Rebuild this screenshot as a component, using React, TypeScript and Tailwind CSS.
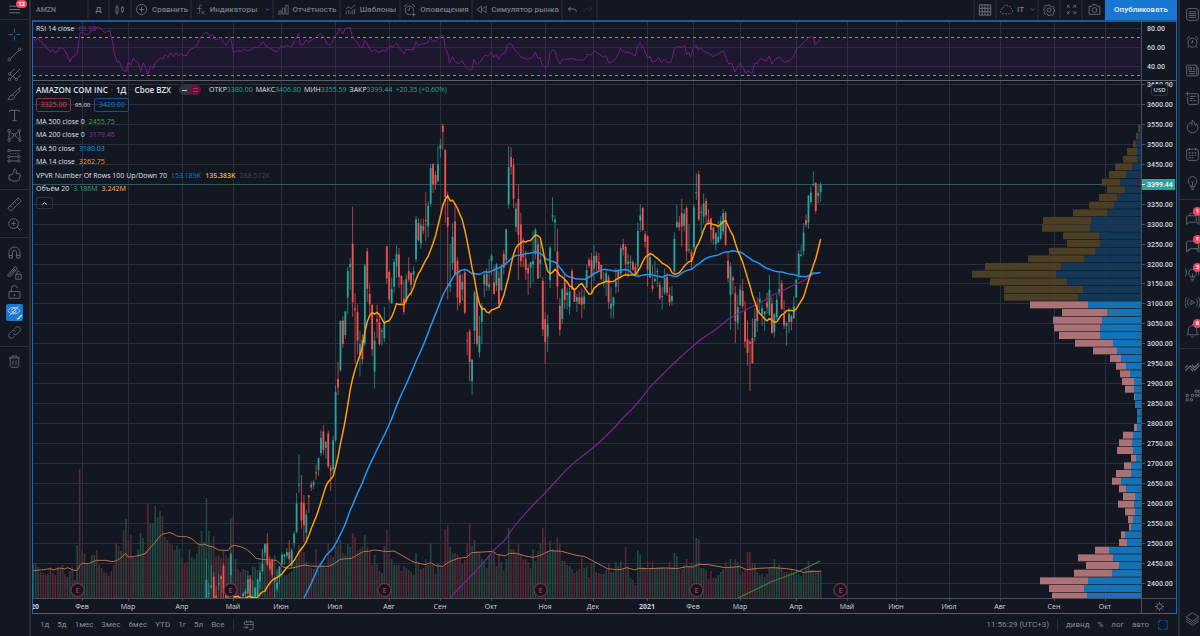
import type { ReactNode } from "react"

type Candle = [open: number, high: number, low: number, close: number]

// daily bars, one row per week or so, open / high / low / close
const candles: Candle[] = [
	// april
	[2346, 2461, 2335, 2408], [2372, 2400, 2316, 2375], [2389, 2445, 2386, 2393], [2416, 2428, 2279, 2328],
	[2369, 2394, 2351, 2363], [2399, 2424, 2382, 2399], [2417, 2420, 2362, 2410], [2443, 2450, 2363, 2376],
	[2372, 2373, 2306, 2314], [2330, 2391, 2310, 2372], [2419, 2475, 2396, 2474],
	// may
	[2336, 2362, 2258, 2286], [2256, 2326, 2256, 2315], [2340, 2351, 2307, 2317], [2329, 2357, 2320, 2351],
	[2374, 2376, 2343, 2367], [2372, 2387, 2357, 2379], [2374, 2419, 2372, 2409], [2411, 2419, 2355, 2356],
	[2366, 2407, 2337, 2367], [2361, 2391, 2353, 2388], [2368, 2411, 2356, 2409], [2404, 2433, 2384, 2426],
	[2429, 2485, 2428, 2449], [2477, 2500, 2467, 2497], [2500, 2525, 2442, 2446], [2455, 2469, 2430, 2436],
	[2458, 2462, 2414, 2421], [2404, 2413, 2330, 2410], [2384, 2436, 2378, 2401], [2415, 2442, 2398, 2442],
	// june
	[2448, 2476, 2444, 2471], [2467, 2473, 2445, 2472], [2468, 2488, 2461, 2478], [2477, 2507, 2450, 2460],
	[2444, 2488, 2437, 2483], [2500, 2530, 2487, 2524], [2529, 2626, 2525, 2600], [2645, 2722, 2626, 2647],
	[2603, 2671, 2536, 2557], [2601, 2621, 2503, 2545], [2526, 2584, 2508, 2572], [2620, 2620, 2576, 2615],
	[2647, 2655, 2631, 2640], [2645, 2659, 2636, 2653], [2678, 2697, 2659, 2675], [2684, 2715, 2669, 2713],
	[2726, 2783, 2718, 2764], [2780, 2796, 2721, 2734], [2739, 2756, 2712, 2754], [2775, 2782, 2688, 2692],
	[2690, 2696, 2630, 2680], [2685, 2769, 2675, 2758],
	// july
	[2758, 2895, 2754, 2879], [2912, 2955, 2871, 2890], [2934, 3059, 2930, 3057], [3058, 3069, 2990, 3000],
	[3022, 3083, 3012, 3081], [3116, 3193, 3074, 3182], [3192, 3215, 3135, 3200], [3251, 3344, 3068, 3104],
	[3089, 3127, 2950, 3084], [3080, 3098, 2973, 3008], [2971, 3032, 2918, 2999], [3009, 3024, 2948, 2961],
	[3001, 3201, 2994, 3196], [3232, 3240, 3105, 3138], [3125, 3150, 3065, 3099], [3098, 3098, 2970, 2986],
	[2930, 3031, 2888, 3008], [3062, 3098, 3015, 3055], [3054, 3077, 2995, 3000], [3030, 3039, 2996, 3033],
	[3014, 3092, 3005, 3051], [3244, 3246, 3151, 3164],
	// august
	[3180, 3184, 3104, 3111], [3101, 3167, 3101, 3138], [3143, 3213, 3127, 3205], [3194, 3247, 3165, 3225],
	[3224, 3240, 3140, 3167], [3170, 3172, 3101, 3148], [3113, 3159, 3073, 3080], [3108, 3174, 3101, 3162],
	[3182, 3217, 3155, 3161], [3178, 3178, 3120, 3148], [3173, 3194, 3154, 3182], [3212, 3320, 3205, 3312],
	[3303, 3315, 3256, 3260], [3252, 3312, 3238, 3297], [3295, 3314, 3275, 3284], [3310, 3380, 3257, 3307],
	[3294, 3357, 3267, 3346], [3351, 3451, 3344, 3441], [3450, 3453, 3378, 3400], [3423, 3433, 3386, 3401],
	[3408, 3495, 3405, 3450],
	// september
	[3489, 3513, 3467, 3499], [3547, 3552, 3486, 3531], [3485, 3488, 3303, 3368], [3318, 3381, 3111, 3294],
	[3144, 3250, 3130, 3149], [3202, 3303, 3185, 3268], [3307, 3349, 3170, 3175], [3208, 3217, 3083, 3116],
	[3172, 3187, 3096, 3102], [3136, 3175, 3108, 3156], [3179, 3187, 3074, 3078], [3009, 3029, 2972, 3008],
	[3031, 3037, 2905, 2955], [2906, 2962, 2871, 2960], [3033, 3134, 3000, 3129], [3120, 3128, 2993, 3000],
	[2978, 3070, 2965, 3020], [3055, 3102, 2999, 3095], [3149, 3176, 3117, 3174], [3176, 3189, 3133, 3145],
	[3142, 3212, 3133, 3149],
	// october
	[3208, 3225, 3173, 3221], [3154, 3196, 3124, 3125], [3146, 3202, 3132, 3199], [3165, 3182, 3090, 3100],
	[3135, 3200, 3132, 3196], [3225, 3234, 3174, 3191], [3210, 3289, 3197, 3287], [3350, 3496, 3339, 3443],
	[3468, 3493, 3424, 3443], [3448, 3464, 3340, 3364], [3293, 3355, 3280, 3339], [3363, 3400, 3160, 3273],
	[3299, 3329, 3192, 3207], [3222, 3266, 3192, 3217], [3213, 3234, 3160, 3185], [3190, 3199, 3122, 3176],
	[3191, 3205, 3140, 3205], [3199, 3282, 3154, 3207], [3225, 3291, 3212, 3286], [3249, 3264, 3163, 3163],
	[3201, 3257, 3165, 3211], [3158, 3167, 3019, 3036],
	// november
	[3062, 3079, 2950, 3004], [3018, 3074, 2980, 3048], [3159, 3245, 3140, 3241], [3319, 3367, 3306, 3322],
	[3304, 3322, 3232, 3311], [3231, 3289, 3112, 3144], [3095, 3114, 3019, 3035], [3062, 3140, 3049, 3137],
	[3160, 3176, 3087, 3110], [3122, 3141, 3086, 3129], [3093, 3142, 3073, 3131], [3183, 3189, 3135, 3136],
	[3134, 3140, 3105, 3105], [3106, 3125, 3080, 3117], [3117, 3132, 3098, 3100], [3116, 3139, 3065, 3098],
	[3100, 3134, 3086, 3118], [3141, 3198, 3140, 3185], [3211, 3216, 3190, 3195], [3209, 3228, 3125, 3168],
	// december
	[3188, 3248, 3157, 3220], [3221, 3232, 3181, 3203], [3206, 3228, 3181, 3186], [3198, 3198, 3159, 3162],
	[3156, 3180, 3141, 3158], [3158, 3184, 3120, 3177], [3167, 3174, 3088, 3104], [3088, 3142, 3064, 3101],
	[3096, 3118, 3063, 3116], [3143, 3190, 3126, 3156], [3181, 3188, 3129, 3165], [3176, 3247, 3163, 3240],
	[3250, 3263, 3221, 3236], [3243, 3249, 3171, 3201], [3200, 3226, 3166, 3206], [3202, 3222, 3180, 3206],
	[3205, 3210, 3184, 3185], [3193, 3202, 3169, 3172], [3194, 3304, 3172, 3283], [3309, 3350, 3281, 3322],
	[3341, 3342, 3282, 3285], [3275, 3282, 3241, 3256],
	// january
	[3270, 3272, 3144, 3186], [3166, 3223, 3165, 3218], [3146, 3197, 3131, 3138], [3157, 3208, 3155, 3162],
	[3180, 3190, 3142, 3182], [3148, 3156, 3110, 3114], [3120, 3142, 3086, 3120], [3128, 3189, 3122, 3165],
	[3167, 3178, 3120, 3127], [3123, 3142, 3095, 3104], [3107, 3145, 3096, 3120], [3181, 3279, 3175, 3263],
	[3293, 3348, 3289, 3306], [3304, 3321, 3283, 3292], [3328, 3363, 3243, 3294], [3296, 3338, 3282, 3326],
	[3341, 3346, 3207, 3232], [3235, 3301, 3228, 3237], [3230, 3236, 3184, 3206],
	// february
	[3242, 3350, 3235, 3342], [3380, 3427, 3361, 3380], [3425, 3434, 3308, 3312], [3330, 3347, 3277, 3331],
	[3319, 3377, 3302, 3352], [3358, 3365, 3304, 3322], [3312, 3338, 3297, 3305], [3314, 3317, 3254, 3286],
	[3292, 3292, 3248, 3262], [3250, 3280, 3234, 3277], [3254, 3308, 3253, 3268], [3263, 3320, 3259, 3308],
	[3282, 3338, 3273, 3328], [3328, 3333, 3245, 3249], [3208, 3232, 3154, 3164], [3123, 3204, 3036, 3194],
	[3166, 3171, 3125, 3159], [3127, 3145, 3002, 3057], [3052, 3122, 3036, 3092],
	// march
	[3097, 3149, 3094, 3136], [3133, 3163, 3087, 3094], [3081, 3107, 2990, 3005], [3012, 3058, 2945, 2977],
	[3005, 3009, 2881, 3000], [3015, 3064, 2951, 2951], [3017, 3090, 3005, 3062], [3098, 3116, 3030, 3057],
	[3104, 3131, 3082, 3113], [3075, 3098, 3045, 3089], [3074, 3082, 3032, 3081], [3104, 3128, 3075, 3091],
	[3073, 3173, 3070, 3135], [3101, 3116, 3025, 3027], [3029, 3077, 3016, 3074], [3067, 3126, 3060, 3110],
	[3127, 3182, 3120, 3137], [3151, 3160, 3085, 3087], [3072, 3109, 3037, 3046], [3044, 3056, 2996, 3052],
	[3055, 3091, 3028, 3075], [3070, 3073, 3034, 3055], [3064, 3119, 3062, 3094],
	// april
	[3117, 3162, 3115, 3161], [3173, 3235, 3161, 3226], [3223, 3247, 3217, 3223], [3233, 3303, 3223, 3279],
	[3310, 3324, 3292, 3299], [3304, 3372, 3288, 3372], [3355, 3395, 3351, 3379], [3400, 3432, 3395, 3400],
	[3404, 3404, 3326, 3333], [3371, 3397, 3352, 3379], [3380, 3406, 3355, 3399],
]

// bar heights before the first candle, negative is a down day
const earlyVolume = [
	33, 34, 35, 31, -26, -25, -24, 24, -31, -25, -23, -31, 29, -33, -24, 21, 27, -31, 18, 53,
	-129, -49, 44, 35, -35, 43, 43, -48, 33, -30, -26, 25, -22, -27, -33, 55, -52, 47, -68, 79,
	-57, -63, 41, -40, 49, 65, 60, -47, -95, 74, 75, 92, 81, 87, -82, -61, 58, -54, -53, 48,
	52, 49, -39, -35, -36, 49, 41, 39, 44, 53, 67, 56,
]

const lateVolume = [
	100, 67, 53, 62, 41, 43, 40, 48, 43, 40, 80,
	82, 39, 29, 26, 29, 28, 27, 23, 32, 31, 28, 36, 49, 54, 50, 35, 34, 43, 27, 31,
	27, 23, 23, 25, 27, 33, 39, 53, 51, 46, 36, 32, 30, 29, 49, 28, 34, 33, 30, 55, 43, 41,
	51, 53, 58, 45, 43, 54, 51, 65, 61, 47, 49, 51, 63, 51, 47, 33, 43, 34, 27, 25, 52, 68,
	44, 39, 33, 33, 33, 27, 32, 30, 28, 26, 23, 45, 35, 29, 30, 39, 33, 55, 34, 24, 35,
	30, 31, 69, 73, 51, 44, 45, 43, 39, 34, 38, 54, 74, 52, 58, 47, 46, 39, 37, 30, 43,
	43, 46, 32, 43, 36, 27, 39, 70, 49, 49, 44, 54, 43, 39, 39, 36, 30, 49, 37, 47, 55, 70,
	61, 47, 57, 49, 47, 61, 55, 37, 37, 33, 32, 29, 25, 27, 29, 40, 30, 32, 21, 35,
	36, 26, 25, 24, 24, 28, 35, 26, 26, 36, 32, 37, 30, 51, 32, 20, 18, 13, 48, 43, 31, 30,
	37, 29, 37, 30, 31, 31, 31, 29, 30, 36, 31, 45, 42, 28, 29, 33, 39, 31, 36,
	34, 60, 59, 30, 30, 28, 19, 27, 20, 20, 23, 26, 29, 36, 30, 39, 31, 39, 36,
	23, 26, 29, 46, 46, 35, 34, 26, 23, 24, 21, 24, 30, 31, 39, 31, 33, 29, 26, 26, 25, 29, 26,
	24, 24, 22, 26, 29, 37, 28, 28, 27, 27, 28,
]

// volume profile rows: left edge and the down/up split
const profile = [
	[1138, 1140], [1136, 1138], [1133, 1136], [1127, 1137], [1123, 1137], [1115, 1132], [1109, 1126], [1102, 1120],
	[1107, 1125], [1099, 1117], [1089, 1114], [1073, 1107], [1043, 1091], [1042, 1090], [1063, 1099], [1067, 1100],
	[1049, 1095], [1028, 1084], [985, 1061], [972, 1056], [990, 1067], [1004, 1083], [1004, 1078], [1030, 1088],
	[1062, 1107], [1053, 1102], [1054, 1100], [1059, 1100], [1075, 1113], [1093, 1117], [1110, 1121], [1116, 1126],
	[1120, 1130], [1122, 1134], [1125, 1134], [1134, 1135], [1135, 1135], [1137, 1137], [1137, 1137], [1134, 1137],
	[1123, 1133], [1119, 1132], [1117, 1133], [1131, 1136], [1124, 1131], [1116, 1131], [1112, 1121], [1119, 1126],
	[1123, 1135], [1118, 1134], [1125, 1135], [1128, 1133], [1129, 1131], [1121, 1125], [1119, 1127], [1095, 1109],
	[1078, 1113], [1086, 1119], [1074, 1112], [1040, 1088], [1049, 1084], [1052, 1087],
]

const rsiPoints =
	"98,122 103,118 108,122 114,112 120,124 125,124 130,136 136,134 142,146 147,150 152,156 158,148 164,158 174,154 180,142 190,146 196,154 203,168 210,186 216,172 224,168 232,158 240,100 246,95 256,104 266,102 280,88 295,80 305,88 314,98 322,94 330,92 338,128 344,164 352,188 358,184 366,204 374,214 380,213 385,186 392,196 400,174 408,185 414,188 422,214 430,188 438,206 444,222 452,196 460,206 466,188 474,182 480,174 488,178 496,164 504,172 512,158 520,170 528,158 536,168 544,160 552,168 560,166 568,150 580,144 590,138 598,120 606,106 614,100 620,96 630,108 638,104 646,120 655,116 662,112 670,128 678,136 686,124 692,112 700,158 712,152 724,154 732,146 740,152 748,152 756,148 764,142 772,144 780,136 790,126 798,138 808,144 818,150 830,156 838,146 844,136 852,142 860,136 868,140 876,138 886,118 896,100 900,132 908,136 918,120 926,126 934,120 944,114 952,108 960,100 966,104 974,116 980,130 988,136 996,130 1002,110 1010,106 1018,84 1028,102 1036,86 1050,82 1056,106 1064,122 1072,126 1080,142 1088,144 1094,120 1102,132 1110,148 1116,156 1124,148 1136,158 1148,150 1154,156 1164,146 1172,138 1180,140 1190,130 1200,146 1212,162 1218,148 1240,150 1248,125 1254,136 1264,132 1280,130 1292,112 1298,124 1310,122 1324,106 1330,106 1336,146 1344,164 1348,190 1358,170 1364,184 1376,192 1386,182 1396,200 1408,210 1416,208 1422,178 1430,194 1440,186 1454,166 1466,168 1474,158 1482,172 1488,162 1496,178 1504,164 1516,158 1522,136 1528,130 1536,134 1544,150 1556,162 1564,172 1584,178 1598,172 1606,156 1614,176 1620,172 1628,198 1636,202 1644,196 1650,158 1658,150 1666,154 1672,178 1680,192 1688,178 1720,176 1730,180 1750,180 1758,172 1762,162 1772,166 1784,154 1798,162 1810,172 1818,166 1826,188 1834,186 1848,176 1862,144 1872,156 1890,158 1906,168 1912,140 1920,128 1932,146 1940,168 1946,174 1950,168 1956,186 1966,184 1976,172 1984,188 1992,178 2002,188 2012,188 2018,170 2022,148 2032,140 2046,142 2054,136 2060,164 2066,158 2072,170 2080,144 2088,136 2094,150 2102,144 2112,154 2130,162 2140,170 2146,166 2170,152 2180,178 2186,192 2196,190 2204,216 2212,204 2220,190 2228,202 2236,218 2246,214 2256,220 2264,190 2272,190 2280,176 2290,180 2300,182 2308,168 2316,192 2326,178 2338,170 2352,186 2368,182 2380,172 2390,146 2400,140 2408,130 2416,124 2426,112 2440,110 2446,134 2454,126 2462,120"

const volumeMaPoints =
	"98,464 130,461 150,458 160,462 180,456 195,459 203,455 222,463 232,463 240,448 246,442 265,443 290,433 318,433 335,437 350,434 365,424 376,412 385,423 400,422 420,418 437,412 450,396 465,380 478,362 488,354 500,352 508,349 520,354 530,360 545,362 560,362 575,368 592,383 605,387 612,384 625,390 640,393 655,402 670,403 685,403 692,392 703,388 722,392 740,400 755,413 768,427 785,430 830,433 840,443 848,453 870,457 885,454 900,450 915,447 930,450 960,451 985,451 1000,445 1020,430 1055,427 1070,418 1090,407 1105,406 1122,402 1140,404 1160,407 1182,405 1200,415 1240,438 1275,446 1292,440 1308,449 1328,451 1350,436 1375,427 1400,424 1415,410 1480,406 1490,415 1515,420 1528,412 1550,412 1575,420 1600,424 1620,418 1650,404 1685,406 1725,417 1755,422 1785,438 1822,458 1850,461 1865,460 1880,455 1905,462 1915,457 1945,458 2000,456 2030,458 2060,452 2080,453 2095,445 2125,446 2175,455 2220,452 2240,461 2275,457 2320,455 2360,458 2385,462 2410,469 2440,466 2462,466"

const ma200Points =
	"450,598 461,586 473,574 485,561 495,549 504,541 516,524 532,506 545,493 557,480 566,470 575,462 585,454 594,447 605,437 615,427 621,420 633,408 640,400 650,387 662,375 672,365 685,353 700,340 715,330 730,318 743,311 760,303 773,295 790,287 805,280 812,275 820,272"

const months: [number, string][] = [
	[82, "Фев"], [128, "Мар"], [182, "Апр"], [233, "Май"], [281, "Июн"], [335, "Июл"], [389, "Авг"],
	[440, "Сен"], [491, "Окт"], [545, "Ноя"], [593, "Дек"], [647, "2021"], [693, "Фев"], [740, "Мар"],
	[796, "Апр"], [847, "Май"], [896, "Июн"], [949, "Июл"], [1000, "Авг"], [1054, "Сен"], [1105, "Окт"],
]

const prices = Array.from({ length: 26 }, (_, i) => 3650 - i * 50)
const earnings = [77, 230, 384, 540, 696, 840]

const BAR_STEP = 2.4375
const FIRST_CANDLE_X = 206.4
const BOTTOM = 598

const priceY = (price: number) => 104.5 + (3600 - price) * 0.3988
const candleX = (i: number) => FIRST_CANDLE_X + i * BAR_STEP

// simple moving average of the closes as polyline points
const movingAverage = (length: number) => {
	const points: string[] = []
	for (let i = length - 1; i < candles.length; i++) {
		let sum = 0
		for (let j = i - length + 1; j <= i; j++) sum += candles[j][3]
		points.push(`${candleX(i).toFixed(1)},${priceY(sum / length).toFixed(1)}`)
	}
	return points.join(" ")
}

function Chart() {
	const firstVolumeX = FIRST_CANDLE_X - earlyVolume.length * BAR_STEP
	const lastY = priceY(3399.44)

	return (
		<svg viewBox="33 22 1143 591" className="block w-full h-auto" role="img" aria-label="AMZN">
			<defs>
				<clipPath id="plot">
					<rect x="33" y="22" width="1108" height="576" />
				</clipPath>
			</defs>
			{/*rsi pane*/}
			<rect x="33" y="37.5" width="1108" height="38" fill="#1d172f" />
			<g stroke="#2b2f3c" strokeWidth="1">
				{months.map(([x]) => (
					<line key={x} x1={x + 0.5} x2={x + 0.5} y1="22" y2="598" />
				))}
				{[28.5, 47.5, 66.5].map((y) => (
					<line key={y} x1="33" x2="1141" y1={y} y2={y} />
				))}
				{prices.map((p) => (
					<line key={p} x1="33" x2="1141" y1={Math.floor(priceY(p)) + 0.5} y2={Math.floor(priceY(p)) + 0.5} />
				))}
			</g>
			<g stroke="#8a8c96" strokeWidth="1" strokeDasharray="3 3">
				<line x1="33" x2="1141" y1="37.5" y2="37.5" />
				<line x1="33" x2="1141" y1="75.5" y2="75.5" />
			</g>
			<polyline points={rsiPoints} transform="scale(0.33333)" fill="none" stroke="#741c86" strokeWidth="3" />
			<line x1="33" x2="1176" y1="80.5" y2="80.5" stroke="#5d5f66" />

			<g clipPath="url(#plot)">
				{/*volume*/}
				{earlyVolume.map((v, i) => (
					<rect key={i} x={firstVolumeX + i * BAR_STEP - 0.8} y={BOTTOM - Math.abs(v)} width="1.6" height={Math.abs(v)} fill={v < 0 ? "#562735" : "#224840"} />
				))}
				{lateVolume.map((v, i) => (
					<rect key={i} x={candleX(i) - 0.8} y={BOTTOM - v} width="1.6" height={v} fill={candles[i] && candles[i][3] < candles[i][0] ? "#562735" : "#224840"} />
				))}
				<polyline points={volumeMaPoints} transform="translate(0 416) scale(0.33333)" fill="none" stroke="#b87045" strokeWidth="3" />
				<polyline points="738,598 771,582 795,573 808,567 820,561" fill="none" stroke="#3a8341" strokeWidth="1.2" />

				<line x1="33" x2="1141" y1={lastY} y2={lastY} stroke="#26a69a" strokeWidth="1" opacity="0.4" />

				{/*candles*/}
				{candles.map(([o, h, l, c], i) => {
					const color = c >= o ? "#26a69a" : "#ef5350"
					const top = priceY(Math.max(o, c))
					return (
						<g key={i}>
							<line x1={candleX(i)} x2={candleX(i)} y1={priceY(h)} y2={priceY(l)} stroke={color} strokeWidth="1" opacity="0.7" />
							<rect x={candleX(i) - 0.9} y={top} width="1.8" height={Math.max(1, priceY(Math.min(o, c)) - top)} fill={color} />
						</g>
					)
				})}

				<polyline points={ma200Points} fill="none" stroke="#75268a" strokeWidth="1.2" />
				<polyline
					points={`304,598 310,586 314,577 318,568 324,559 ${movingAverage(50)}`}
					fill="none"
					stroke="#2196f3"
					strokeWidth="1.5"
				/>
				<polyline points={`233,597 ${movingAverage(14)}`} fill="none" stroke="#ff9f0a" strokeWidth="1.5" />

				{/*volume profile*/}
				{profile.map(([left, split], i) => {
					const y = 125 + i * 7.667
					const inArea = i < 23
					return (
						<g key={i} opacity="0.95">
							<rect x={left} y={y} width={split - left} height="7" fill={inArea ? "#4e4124" : "#b57679"} />
							<rect x={split} y={y} width={1141 - split} height="7" fill={inArea ? "#133a5a" : "#1677bc"} />
						</g>
					)
				})}
			</g>

			{earnings.map((x) => (
				<g key={x}>
					<circle cx={x + 0.5} cy="590" r="6.6" fill="#131722" stroke="#7e303e" strokeWidth="1.2" />
					<text x={x + 0.5} y="592.5" fontSize="7" fontWeight="600" textAnchor="middle" fill="#a33c4a">E</text>
				</g>
			))}

			{/*axes*/}
			<g stroke="#4c4f59">
				<line x1="1141.5" x2="1141.5" y1="22" y2="613" />
				<line x1="33" x2="1176" y1="598.5" y2="598.5" />
				{prices.map((p) => (
					<line key={p} x1="1142" x2="1145" y1={Math.floor(priceY(p)) + 0.5} y2={Math.floor(priceY(p)) + 0.5} />
				))}
				{months.map(([x]) => (
					<line key={x} x1={x + 0.5} x2={x + 0.5} y1="599" y2="601" />
				))}
			</g>
			<g fontSize="7" fill="#d1d4dc" className="font-['Roboto',sans-serif]" fontWeight="500">
				<text x="1147" y="30.5">80.00</text>
				<text x="1147" y="49.5">60.00</text>
				<text x="1147" y="68.5">40.00</text>
				{/*3400 sits under the last price label*/}
				{prices.filter((p) => p !== 3400).map((p) => (
					<text key={p} x="1147" y={Math.round(priceY(p) + 2.5)}>{p}.00</text>
				))}
			</g>
			<rect x="1151.5" y="84.5" width="16" height="11" rx="2.5" fill="#131722" stroke="#2f333f" />
			<text x="1159.5" y="92" fontSize="6" fontWeight="600" textAnchor="middle" fill="#d1d4dc">USD</text>
			<rect x="1142" y="179" width="33" height="11" fill="#26a69a" />
			<line x1="1142" x2="1145" y1="184.5" y2="184.5" stroke="#ffffff" />
			<text x="1147" y="187" fontSize="7" fontWeight="500" fill="#ffffff" className="font-['Roboto',sans-serif]">3399.44</text>
			<g fontSize="7" fill="#d1d4dc" fontWeight="500" textAnchor="middle">
				<text x="35" y="609" fontWeight="700">20</text>
				{months.map(([x, name]) => (
					<text key={x} x={x} y="609" fontWeight={name === "2021" ? 700 : 500}>{name}</text>
				))}
			</g>
			<g stroke="#787b86" fill="none" transform="translate(1159.5 606.5)">
				<circle r="2.6" strokeWidth="0.8" />
				<path d="M0-4.4V-3M0 4.4V3M-4.4 0H-3M4.4 0H3M-3.1-3.1l1 1M3.1 3.1l-1-1M-3.1 3.1l1-1M3.1-3.1l-1 1" strokeWidth="1" />
			</g>
		</svg>
	)
}

function Icon({ children, className = "size-[17px]" }: { children: ReactNode; className?: string }) {
	return (
		<svg viewBox="0 0 28 28" className={`shrink-0 ${className}`} fill="none" stroke="currentColor" strokeWidth="1.5" strokeLinejoin="round" aria-hidden="true">
			{children}
		</svg>
	)
}

const icons = {
	menu: <path d="M4 8h20M4 14h20M4 20h20" strokeWidth="2" />,
	cross: <path d="M14 4v7M14 17v7M4 14h7M17 14h7" strokeWidth="1.8" />,
	line: <><circle cx="5.5" cy="22.5" r="2.2" /><circle cx="22.5" cy="5.5" r="2.2" /><path d="M7.5 20.5l13-13" /></>,
	fork: <><circle cx="6" cy="13" r="2" /><circle cx="6" cy="22" r="2" /><circle cx="17" cy="22" r="2" /><path d="M7.500 11.500l7-7M7.500 20.500L23 5M18.500 20.500l6-6M7.500 14.500l8 6" /></>,
	brush: <><path d="M10 15c-3 0-4 2-4.500 4-.3 1.500-1.500 2.500-2.500 3 4 1.500 10 .5 11-3 .4-2-1.500-4-4-4z" /><path d="M10.500 14.500l9-9c1.500-1.500 4.500 0 3 2.500l-8 9" /><path d="M20 5l5-3" /></>,
	text: <path d="M6 8V5.500h16V8M14 5.500v17M10.500 22.500h7" />,
	pattern: <><circle cx="5" cy="6" r="2" /><circle cx="5" cy="22" r="2" /><circle cx="14" cy="13" r="2" /><circle cx="22" cy="6" r="2" /><circle cx="23" cy="22" r="2" /><path d="M5 8v12M6.500 20.500l6-6M15.500 11.500l5-4M22 8l1 12M6.500 7.500l6 4.500M15.500 14.500l6 6" /></>,
	forecast: <><circle cx="5" cy="6" r="2" /><circle cx="5" cy="16" r="2" /><circle cx="5" cy="23" r="2" /><circle cx="21" cy="16" r="2" /><circle cx="21" cy="23" r="2" /><path d="M7 6h17M7 16h12M7 23h12" /><path d="M7 11h16" strokeDasharray="2 2" /></>,
	thumb: <path d="M5 13h4l4-5V5c0-2.500 4-2 4 1v5h5c2 0 2 2 1.500 3.500l-2 7c-.3 1-1 1.500-2 1.500H11c-1 0-2-1-2-2H5z" />,
	ruler: <path d="M3 20L20 3l5 5L8 25zM7 16l2.500 2.500M10.500 12.500L13 15M14 9l2.500 2.500M17.500 5.500L20 8" />,
	zoom: <><circle cx="12.500" cy="12.500" r="8" /><path d="M12.500 9v7M9 12.500h7M18.500 18.500l5 5" /></>,
	magnet: <path d="M5 23v-9a9 9 0 0118 0v9h-5.500v-9a3.500 3.500 0 00-7 0v9zM5 19h5.500M17.500 19H23" />,
	pencilLock: <><path d="M3 18L15 4l4 3L8 20H3zM12 8l4 3M6 18l9-10" /><path d="M16 17h9v8h-9zM18 17v-2.500a2.500 2.500 0 015-.5" /><path d="M20.500 20v2" /></>,
	lock: <><path d="M5 12.500h18v11H5zM9 12.500V8a5 5 0 0110-1" /><path d="M14 16.500v3" strokeWidth="2" /></>,
	eye: <><path d="M3 11c4-7 16-7 20 0-4 7-16 7-20 0zM6 19L21 3" /><circle cx="13" cy="11" r="3.500" /><path d="M18 24c2 1 4 0 4-2l4-4" strokeWidth="2.500" /></>,
	link: <path d="M12 16a4.500 4.500 0 006.500.3l4-4a4.500 4.500 0 00-6.500-6.500L14 8M16 12a4.500 4.500 0 00-6.500-.3l-4 4a4.500 4.500 0 006.500 6.500l2-2" />,
	trash: <path d="M5 8h18M10 8V5h8v3M7 8v13c0 1.500 1 2.500 2.500 2.500h9c1.500 0 2.500-1 2.500-2.500V8M11.500 12v8M16.500 12v8" />,
	bars: <><path d="M8 4v4M8 20v4M6 8h4v12H6zM19 6v3M19 17v3M17 9h4v8h-4z" /></>,
	plus: <><circle cx="14" cy="14" r="9.500" /><path d="M14 9v10M9 14h10" /></>,
	fx: <path d="M17 5c-3-1.500-5 0-5 3v11c0 3-2 4.500-5 3.500M7 12h9M16 17l7 7M23 17l-7 7" />,
	report: <path d="M4 24v-7h5v7zM11.500 24V11h5v13zM19 24V5h5v19z" />,
	template: <path d="M4 13l6-5 5 4 9-8M5 24v-6M10 24v-9M15 24v-7M19 24v-9M23 24V13" />,
	alarm: <><circle cx="14" cy="14.500" r="8.500" /><path d="M14 9.500v5h-4M4 8.500c0-3 2-5 5-5M24 8.500c0-3-2-5-5-5M7 21l-2 3M21 21l2 3" /></>,
	alarmAdd: <><path d="M21 17a8.500 8.500 0 10-5 5.500M13 9v5.500H9M3.500 8c0-3 2-5 5-5M23 8c0-3-2-5-5-5M21 19v8M17 23h8" /></>,
	rewind: <path d="M14 7v14L4 14zM24 7v14l-10-7z" />,
	undo: <path d="M10 8l-5 5 5 5M5.500 13H17c3 0 5 2 5 6" strokeWidth="2" />,
	redo: <path d="M18 8l5 5-5 5M22.500 13H11c-3 0-5 2-5 6" strokeWidth="2" />,
	layout: <path d="M4 5h20v18H4zM9 5v18M14 5v18M19 5v18M4 11h20M4 17h20" />,
	cloud: <path d="M8 22a5 5 0 01-.5-10c1-8 12-8 13.500-1 6 1 5 11-1 11z" strokeDasharray="3 2" />,
	gear: <><circle cx="14" cy="14" r="4" /><path d="M12 4h4l.7 3 2.300 1 2.700-1.700 2.600 2.700-1.600 2.700 1 2.300 2.300.5v2l-3 .7-1 2.300 1.700 2.700-2.700 2.600-2.700-1.600-2.300 1L16 25h-4l-.7-3-2.300-1-2.700 1.600-2.600-2.600L5.400 17.300l-1-2.300L3 14.500v-2L5 12l1-2.500L4.300 7 7 4.300 9.500 6l2-1z" /></>,
	expand: <path d="M5 10V5h5M18 5h5v5M23 18v5h-5M10 23H5v-5M6 6l5 5M22 6l-5 5M22 22l-5-5M6 22l5-5" />,
	camera: <><path d="M4 8h5l2-3h6l2 3h5v15H4z" /><circle cx="14" cy="15" r="4.500" /></>,
	list: <><rect x="3" y="3" width="22" height="22" rx="4" /><path d="M7 9h14M7 12.500h14M7 16h14M7 19.500h14" /></>,
	news: <><path d="M3 4h19v17c0 2 3 2 3 0V9h-3M3 4v17c0 2 1 3 3 3h17" /><path d="M7 8h5v5H7zM15 9h4M15 12h4M7 16h12M7 20h12" /></>,
	data: <><path d="M10 5h13c1.500 0 2 1 2 2v15c0 2-1 3-3 3H8c-2 0-3-1-3-3V11M5 1v8M1 5h8M9 10h12M9 14h7M9 18h4M15 18h6" /></>,
	fire: <path d="M13 6C8 7 4 11 4 16a10 9.500 0 0020 0c0-3-1-5-2.500-7-.5 2-1.500 3-3 3.500C19 9 17 5 13 2c1 2 1 3 0 4v6" />,
	calendar: <><rect x="3" y="4" width="22" height="21" rx="4" /><path d="M8 2v4M20 2v4M7 11h3M12.500 11h3M18 11h3M7 15.500h3M12.500 15.500h3M18 15.500h3M7 20h3M12.500 20h3" strokeWidth="2" /></>,
	bulb: <path d="M10 21c0-4-4-5-4-10a8 8 0 0116 0c0 5-4 6-4 10zM10 24h8M11.500 27h5M14 20v-7M12 12l2 2 2-2" />,
	chats: <path d="M9 9V6c0-1 1-2 2-2h14M3 11c0-1 1-2 2-2h14c1 0 2 1 2 2v8c0 1-1 2-2 2H8l-5 4zM21 21l5 4V9" />,
	chat: <path d="M3 6c0-1 1-2 2-2h20v14H11l-6 6M3 6v18l5-6M20 18l6 7V10" />,
	ideas: <path d="M10 19c0-3-3-4-3-8a7 7 0 0114 0c0 4-3 5-3 8zM11 23h6M12 26h4M14 19v-7M4 5c-2 3-2 8 0 11M1 3c-2 4-2 11 0 15M24 5c2 3 2 8 0 11" />,
	stream: <path d="M11 10v8l7-4zM7 7c-3 4-3 10 0 14M3 4c-4 6-4 14 0 20M21 7c3 4 3 10 0 14M25 4c4 6 4 14 0 20" />,
	bell: <path d="M3 22c3-2 3-4 3-9a8 8 0 0116 0c0 5 0 7 3 9zM11 25c1 2 5 2 6 0M14 5V2" />,
	trade: <path d="M1 20l9-9 8 8 9-9M1 14l4-4M10 16l5 5M13 9l5 5 8-8" strokeWidth="2" />,
	dom: <path d="M2 12h4v4H2zM2 20h4v4H2zM10 20h4v4h-4zM12 12h4v4h-4zM19 12h4v4h-4zM19 4h4v4h-4zM25 4h4v4h-4zM25 12h4v4h-4z" />,
	layers: <path d="M14 3l12 8-12 8L2 11zM2 15l12 8 12-8M2 19l12 8 12-8" />,
	goto: <path d="M5 11V8c0-1 1-2 2-2h15c1 0 2 1 2 2v13c0 1-1 2-2 2h-7M10 3v5M19 3v5M5 12h19M3 18h9M9 14.500l3.500 3.500L9 21.500" />,
	full: <path d="M4 10V5.500C4 4.500 4.500 4 5.500 4H10M18 4h4.500c1 0 1.500.5 1.500 1.500V10M24 18v4.500c0 1-.5 1.500-1.500 1.500H18M10 24H5.500C4.500 24 4 23.500 4 22.500V18M13 4h2M13 24h2M4 13v2M24 13v2" strokeWidth="2.200" />,
	down: <path d="M4 9l10 9 10-9" strokeWidth="4" />,
	up: <path d="M6 18l8-8 8 8" strokeWidth="4" />,
}

type IconName = keyof typeof icons

function RailButton({ icon, label, active }: { icon: IconName; label: string; active?: boolean }) {
	return (
		<button type="button" aria-label={label} className="flex flex-1 items-center justify-center w-full">
			<span className={active ? "flex rounded-xs bg-[#1976d2] text-[#b9d4f2]" : "flex"}>
				<Icon>{icons[icon]}</Icon>
			</span>
		</button>
	)
}

function LeftRail() {
	return (
		<aside className="flex flex-col shrink-0 w-[31px] border-r-2 border-[#2a2e39] text-[#686b76]">
			<button type="button" aria-label="Меню" className="relative flex h-5 w-full items-center justify-center border-b border-[#2a2e39]">
				<Icon className="size-[15px]">{icons.menu}</Icon>
				<span className="absolute right-[2px] top-0 rounded-full bg-[#f7455f] px-[2px] text-[6px] leading-[8px] font-bold text-white">12</span>
			</button>
			<div className="flex flex-col h-[170px] pt-[4px] pb-[3px] border-b border-[#2a2e39]">
				<div className="flex flex-1 text-[#1c5cab]"><RailButton icon="cross" label="Перекрестие" /></div>
				<RailButton icon="line" label="Линия тренда" />
				<RailButton icon="fork" label="Вилы" />
				<RailButton icon="brush" label="Кисть" />
				<RailButton icon="text" label="Текст" />
				<RailButton icon="pattern" label="Паттерны" />
				<RailButton icon="forecast" label="Прогноз" />
				<RailButton icon="thumb" label="Значки" />
			</div>
			<div className="flex flex-col h-12 pt-[5px] pb-[3px] border-b border-[#2a2e39]">
				<RailButton icon="ruler" label="Линейка" />
				<RailButton icon="zoom" label="Увеличить" />
			</div>
			<div className="flex flex-col h-[109px] py-[4px] border-b border-[#2a2e39]">
				<RailButton icon="magnet" label="Магнит" />
				<RailButton icon="pencilLock" label="Режим рисования" />
				<RailButton icon="lock" label="Заблокировать" />
				<RailButton icon="eye" label="Скрыть" active />
				<RailButton icon="link" label="Связать" />
			</div>
			<div className="flex h-7">
				<RailButton icon="trash" label="Удалить" />
			</div>
		</aside>
	)
}

function WidgetButton({ icon, label, badge }: { icon: IconName; label: string; badge?: string }) {
	return (
		<button type="button" aria-label={label} className="relative flex h-7 w-full shrink-0 items-center pl-[5px]">
			<Icon className="size-[15px]">{icons[icon]}</Icon>
			{badge !== undefined ? (
				<span className="absolute left-[13px] top-[3px] size-[9px] rounded-full bg-[#f7455f] text-center text-[6px] leading-[9px] font-bold text-white">{badge}</span>
			) : null}
		</button>
	)
}

function RightRail() {
	return (
		<aside className="flex flex-col shrink-0 w-[22px] overflow-hidden border-l-2 border-[#2a2e39] text-[#6f727d]">
			<div className="flex flex-col h-[200px] border-b border-[#2a2e39]">
				<WidgetButton icon="list" label="Список котировок" />
				<WidgetButton icon="alarm" label="Оповещения" />
				<WidgetButton icon="news" label="Новости" />
				<WidgetButton icon="data" label="Окно данных" />
				<WidgetButton icon="fire" label="Лидеры" />
				<WidgetButton icon="calendar" label="Календарь" />
				<WidgetButton icon="bulb" label="Идеи" />
			</div>
			<div className="flex flex-col py-1 border-b border-[#2a2e39]">
				<WidgetButton icon="chats" label="Чаты" badge="1" />
				<WidgetButton icon="chat" label="Сообщения" badge="1" />
				<WidgetButton icon="ideas" label="Лента идей" badge="3" />
				<WidgetButton icon="stream" label="Трансляции" />
				<WidgetButton icon="bell" label="Уведомления" badge="8" />
			</div>
			<div className="flex flex-col pt-1">
				<WidgetButton icon="trade" label="Заявки" />
				<WidgetButton icon="dom" label="Стакан" />
			</div>
			<div className="mt-auto pb-1">
				<WidgetButton icon="layers" label="Дерево объектов" />
			</div>
		</aside>
	)
}

const headerButton = "flex shrink-0 items-center justify-center gap-[3px] border-r-2 border-[#1f232e]"

function Header() {
	return (
		<header className="flex h-5 pb-px overflow-hidden font-['Roboto',sans-serif] text-[8px] leading-[10px] font-medium whitespace-nowrap text-[#787b86]">
			<button type="button" className={`${headerButton} w-[58px] justify-start pl-[5px] text-[7px]`}>AMZN</button>
			<button type="button" className={`${headerButton} w-[21px]`}>Д</button>
			<button type="button" aria-label="Свечи" className={`${headerButton} w-[22px]`}><Icon className="size-[14px]">{icons.bars}</Icon></button>
			<button type="button" className={`${headerButton} w-[60px]`}><Icon className="size-[15px]">{icons.plus}</Icon>Сравнить</button>
			<button type="button" className={`${headerButton} w-[82px]`}>
				<Icon className="size-[13px]">{icons.fx}</Icon>Индикаторы
				<Icon className="size-[5px] ml-[5px]">{icons.down}</Icon>
			</button>
			<button type="button" className={`${headerButton} w-[67px]`}><Icon className="size-[13px]">{icons.report}</Icon>Отчётность</button>
			<button type="button" className={`${headerButton} w-[60px]`}><Icon className="size-[13px]">{icons.template}</Icon>Шаблоны</button>
			<button type="button" className={`${headerButton} w-[72px]`}><Icon className="size-[14px]">{icons.alarmAdd}</Icon>Оповещения</button>
			<button type="button" className={`${headerButton} w-[90px]`}><Icon className="size-[13px]">{icons.rewind}</Icon>Симулятор рынка</button>
			<button type="button" aria-label="Отменить" className="flex shrink-0 items-center pl-[3px]"><Icon className="size-[13px]">{icons.undo}</Icon></button>
			<button type="button" aria-label="Повторить" className="flex shrink-0 w-[19px] items-center justify-center border-r-2 border-[#1f232e] text-[#33363f]"><Icon className="size-[13px]">{icons.redo}</Icon></button>
			<div className="flex flex-1 border-r-2 border-[#1f232e]"></div>
			<button type="button" aria-label="Расположение" className={`${headerButton} w-[22px]`}><Icon className="size-[16px]">{icons.layout}</Icon></button>
			<button type="button" className={`${headerButton} w-[42px]`}>
				<Icon className="size-[15px]">{icons.cloud}</Icon>IT
				<Icon className="size-[5px] ml-[3px]">{icons.down}</Icon>
			</button>
			<button type="button" aria-label="Настройки" className={`${headerButton} w-[22px]`}><Icon className="size-[14px]">{icons.gear}</Icon></button>
			<button type="button" aria-label="Полный экран" className={`${headerButton} w-[22px]`}><Icon className="size-[13px]">{icons.expand}</Icon></button>
			<button type="button" aria-label="Снимок" className="flex shrink-0 w-[22px] items-center justify-center"><Icon className="size-[15px]">{icons.camera}</Icon></button>
			<button type="button" className="shrink-0 w-[72px] -mb-px mr-px bg-[#1976d2] font-bold text-[#d5e5f7]">Опубликовать</button>
		</header>
	)
}

function LegendRow({ title, children }: { title: string; children: ReactNode }) {
	return (
		<div className="flex flex-1 items-center gap-[4px]">
			<span>{title}</span>
			{children}
		</div>
	)
}

function Quote({ name, value }: { name: string; value: string }) {
	return (
		<span>{name}<span className="text-[#26a69a]">{value}</span></span>
	)
}

function Legend() {
	return (
		<div className="absolute inset-0 pl-[3px] text-[7px] leading-[10px] font-medium text-[#dfe1e7] whitespace-nowrap">
			<div className="flex h-[62px] pt-[2px] gap-[4px]">
				<span>RSI 14 close</span>
				<span className="text-[#7b1fa2]">66.95</span>
			</div>
			<div className="flex h-3 items-center gap-[8px]">
				<h1 className="flex gap-[3px] text-[8px] leading-[12px] font-semibold text-[#dfe1e7]">
					<span>AMAZON COM INC</span><span className="text-[#5d606b]">·</span>
					<span>1Д</span><span className="text-[#5d606b]">·</span>
					<span>Cboe BZX</span>
				</h1>
				<span className="flex h-[10px] overflow-hidden rounded-full">
					<span className="flex w-[11px] items-center justify-center bg-[#2f333f]"><span className="h-px w-[5px] bg-[#c8cad0]"></span></span>
					<span className="flex w-[11px] flex-col items-center justify-center gap-[2px] bg-[#5c1839]">
						<span className="h-px w-[5px] bg-[#d81b60]"></span>
						<span className="h-px w-[5px] bg-[#d81b60]"></span>
					</span>
				</span>
				<div className="flex gap-[3px]">
					<Quote name="ОТКР" value="3380.00" />
					<Quote name="МАКС" value="3406.80" />
					<Quote name="МИН" value="3355.59" />
					<Quote name="ЗАКР" value="3399.44" />
					<span className="text-[#26a69a]">+20.35 (+0.60%)</span>
				</div>
			</div>
			<div className="flex mt-[2px] h-[14px] items-center gap-[4px]">
				<button type="button" className="h-full w-[35px] rounded-xs border border-[#8f2f38] text-[#e04a50]">3325.00</button>
				<span className="text-[6px]">95.00</span>
				<button type="button" className="h-full w-[35px] rounded-xs border border-[#1c4f8f] text-[#2777c9]">3420.00</button>
			</div>
			<div className="flex flex-col mt-[3px] h-[81px]">
				<LegendRow title="MA 500 close 0"><span className="text-[#43a047]">2455.75</span></LegendRow>
				<LegendRow title="MA 200 close 0"><span className="text-[#8f27ad]">3179.46</span></LegendRow>
				<LegendRow title="MA 50 close"><span className="text-[#2196f3]">3180.03</span></LegendRow>
				<LegendRow title="MA 14 close"><span className="text-[#ff9f0a]">3262.75</span></LegendRow>
				<LegendRow title="VPVR Number Of Rows 100 Up/Down 70">
					<span className="text-[#1f7ec4]">153.189K</span>
					<span className="font-semibold text-[#e3b62f]">135.383K</span>
					<span className="text-[#40434d]">288.572K</span>
				</LegendRow>
				<LegendRow title="Объём 20">
					<span className="text-[#3f9f76]">3.186M</span>
					<span className="font-semibold text-[#e8854a]">3.242M</span>
				</LegendRow>
			</div>
			<button type="button" aria-label="Свернуть" className="flex mt-[1px] h-[12px] w-[17px] items-center justify-center rounded-xs border border-[#2f333f]">
				<Icon className="size-[7px]">{icons.up}</Icon>
			</button>
		</div>
	)
}

const ranges = ["1д", "5д", "1мес", "3мес", "6мес", "YTD", "1г", "5л", "Все"]

function Footer() {
	return (
		<footer className="flex flex-1 min-h-[22px] items-center gap-[8px] pl-[9px] pr-[9px] font-['Roboto',sans-serif] text-[8px] leading-[10px] text-[#868993]">
			{ranges.map((range) => (
				<button key={range} type="button">{range}</button>
			))}
			<span className="h-[12px] w-px bg-[#2a2e39]"></span>
			<button type="button" aria-label="Перейти к дате"><Icon className="size-[13px]">{icons.goto}</Icon></button>
			<span className="ml-auto">11:56:29 (UTC+3)</span>
			<span className="h-[12px] w-px bg-[#2a2e39]"></span>
			<button type="button">дивнд</button>
			<button type="button">%</button>
			<button type="button">лог</button>
			<button type="button">авто</button>
			<button type="button" aria-label="Развернуть" className="text-[#1c62b5]"><Icon className="size-[12px]">{icons.full}</Icon></button>
		</footer>
	)
}

export default function App() {
	return (
		<div className="flex min-h-screen bg-[#131722] font-['Open_Sans','Noto_Sans',sans-serif]">
			<LeftRail />
			<main className="flex flex-1 min-w-0 flex-col">
				<Header />
				<div className="relative mx-px border border-t-2 border-[#1a6bc0] border-t-[#1f569c]">
					<Chart />
					<Legend />
				</div>
				<Footer />
			</main>
			<RightRail />
		</div>
	)
}
